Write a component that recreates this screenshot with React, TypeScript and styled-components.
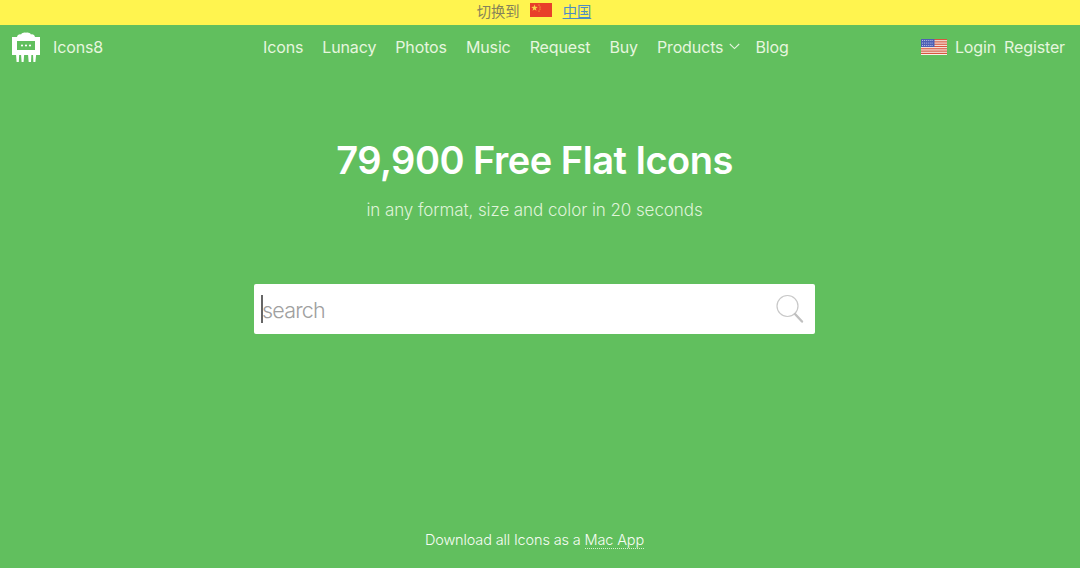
import React from "react";
import styled, { createGlobalStyle } from "styled-components";

const GlobalStyle = createGlobalStyle`
  html, body {
    margin: 0;
    padding: 0;
    height: 100%;
    background: #61bf5e;
  }
  body {
    font-family: Inter, "Noto Sans CJK SC", sans-serif;
    overflow: hidden;
  }
`;

const Page = styled.div`
  width: 1080px;
  height: 568px;
  display: flex;
  flex-direction: column;
  background: #61bf5e;
  color: #fff;
`;

const LangBar = styled.div`
  height: 25px;
  flex: none;
  display: flex;
  align-items: center;
  justify-content: center;
  gap: 10.500px;
  padding: 0 12px 5px 0;
  box-sizing: border-box;
  background: #fff44f;
  font-family: "Noto Sans CJK SC", sans-serif;
  font-size: 14.300px;
  color: #85825a;
`;

const CountryLink = styled.a`
  color: #4f8cc4;
  text-decoration: underline;
`;

const Nav = styled.nav`
  height: 45px;
  flex: none;
  display: flex;
  align-items: center;
  padding: 0 15px 2px 12px;
  box-sizing: border-box;
  font-size: 16px;
  letter-spacing: -0.13px;
  color: #e6f6df;
`;

const Brand = styled.a`
  display: flex;
  align-items: center;
  gap: 13px;
  width: 251px;
`;

const Links = styled.div`
  display: flex;
  align-items: center;
  gap: 19px;
`;

const NavLink = styled.a`
  display: flex;
  align-items: center;
  gap: 6px;
`;

const ChevronWrap = styled.span`
  display: flex;
  margin-right: -4px;
`;

const Account = styled.div`
  margin-left: auto;
  display: flex;
  align-items: center;
  gap: 8px;
`;

const Hero = styled.main`
  flex: 1;
  display: flex;
  flex-direction: column;
  align-items: center;
  padding-right: 11px;
`;

const Title = styled.h1`
  margin: 65px 0 0;
  font-size: 38px;
  line-height: 50px;
  font-weight: 600;
  letter-spacing: -0.5px;
  color: #fff;
`;

const Subtitle = styled.p`
  margin: 13px 0 0;
  font-size: 17px;
  line-height: 24px;
  font-weight: 300;
  letter-spacing: -0.08px;
  color: #dff3d8;
`;

const SearchBox = styled.div`
  margin-top: 62px;
  width: 561px;
  height: 50px;
  display: flex;
  align-items: center;
  justify-content: space-between;
  padding: 0 10px 0 7px;
  box-sizing: border-box;
  background: #fff;
  border-radius: 2px;
`;

const Placeholder = styled.span`
  display: flex;
  align-items: center;
  font-size: 21.500px;
  font-weight: 300;
  letter-spacing: -0.8px;
  color: #a0a0a0;
`;

const PlaceholderText = styled.span`
  padding-top: 2px;
`;

const Caret = styled.span`
  width: 2px;
  height: 28px;
  background: #666;
  margin-right: -1px;
`;

const Footer = styled.p`
  margin: auto 0 18px;
  font-size: 14.500px;
  line-height: 20px;
  font-weight: 300;
  letter-spacing: -0.14px;
  color: #f6fcf3;
`;

const AppLink = styled.a`
  border-bottom: 1px dotted #d8f0d0;
`;

const navItems = ["Icons", "Lunacy", "Photos", "Music", "Request", "Buy"];

function Logo() {
  return (
    <svg width="28" height="30" viewBox="0 0 28 30" fill="#fff">
      <path d="M0 5h5c.5-2 2-3 4-2.500C10 1 12 .2 14 .8c2-.6 4 .2 5 1.700 2-.5 3.500.5 4 2.500h5v18H0z" />
      <rect x="5" y="9" width="18" height="9" fill="#61bf5e" />
      <circle cx="10" cy="13.500" r="1.100" />
      <circle cx="14" cy="13.500" r="1.100" />
      <circle cx="18" cy="13.500" r="1.100" />
      <path d="M4 22h3.200l-.4 8H4.600zM9 22h3.200l-.6 8H9.600zM16 22h3.400l-.4 8h-2.300zM21 22h3.200l-.8 8h-2z" />
    </svg>
  );
}

function ChinaFlag() {
  return (
    <svg width="22" height="14" viewBox="0 0 22 14">
      <rect width="22" height="14" fill="#e8402a" />
      <path d="M4.500 1.500l.8 2.300 2.400.1-1.900 1.500.7 2.300-2-1.300-2 1.300.7-2.300-1.900-1.500 2.400-.1z" fill="#f6d54a" />
      <circle cx="9" cy="2" r=".6" fill="#f6d54a" />
      <circle cx="10" cy="4" r=".6" fill="#f6d54a" />
      <circle cx="10" cy="6" r=".6" fill="#f6d54a" />
      <circle cx="9" cy="8" r=".6" fill="#f6d54a" />
    </svg>
  );
}

function UsFlag() {
  const stripes = [0, 2.300, 4.600, 6.900, 9.200, 11.500, 13.800];
  const dots = [1.500, 3.500, 5.500, 7.500, 9.500, 11.500];
  return (
    <svg width="26" height="16" viewBox="0 0 27 16" preserveAspectRatio="none">
      <rect width="27" height="16" fill="#f8f0e8" />
      {stripes.map((y) => (
        <rect key={y} y={y} width="27" height="1.200" fill="#d8563f" />
      ))}
      <rect width="14" height="8" fill="#4d5fb5" />
      {[1.500, 4, 6.500].map((y) =>
        dots.map((x) => (
          <circle key={`${x}-${y}`} cx={x} cy={y} r=".5" fill="#dfe4f5" />
        ))
      )}
    </svg>
  );
}

function SearchIcon() {
  return (
    <svg width="30" height="30" viewBox="0 0 30 30" fill="none">
      <circle cx="12.500" cy="12" r="10.500" stroke="#c8c8c8" strokeWidth="1.200" />
      <path d="M20 20l7 7.500" stroke="#c0c0c0" strokeWidth="2.400" strokeLinecap="round" />
    </svg>
  );
}

function Chevron() {
  return (
    <svg width="11" height="7" viewBox="0 0 11 7" fill="none">
      <path d="M.8 1l4.700 4.600L10.200 1" stroke="#e6f6df" strokeWidth="1.100" />
    </svg>
  );
}

export default function App() {
  return (
    <Page>
      <GlobalStyle />
      <LangBar>
        <span>切换到</span>
        <ChinaFlag />
        <CountryLink>中国</CountryLink>
      </LangBar>
      <Nav>
        <Brand>
          <Logo />
          Icons8
        </Brand>
        <Links>
          {navItems.map((item) => (
            <NavLink key={item}>{item}</NavLink>
          ))}
          <NavLink>
            Products
            <ChevronWrap>
              <Chevron />
            </ChevronWrap>
          </NavLink>
          <NavLink>Blog</NavLink>
        </Links>
        <Account>
          <UsFlag />
          <NavLink>Login</NavLink>
          <NavLink>Register</NavLink>
        </Account>
      </Nav>
      <Hero>
        <Title>79,900 Free Flat Icons</Title>
        <Subtitle>in any format, size and color in 20 seconds</Subtitle>
        <SearchBox>
          <Placeholder>
            <Caret />
            <PlaceholderText>search</PlaceholderText>
          </Placeholder>
          <SearchIcon />
        </SearchBox>
        <Footer>
          Download all Icons as a <AppLink>Mac App</AppLink>
        </Footer>
      </Hero>
    </Page>
  );
}
